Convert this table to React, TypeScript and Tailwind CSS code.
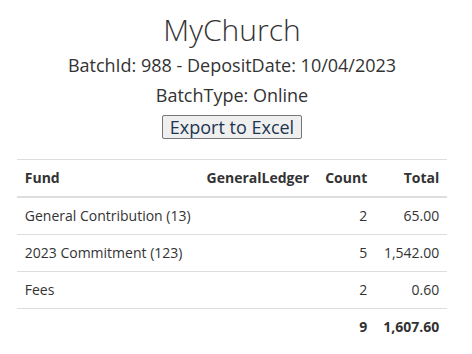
import React from "react";

type Row = { fund: string; gl: string; count: number; total: string };

const rows: Row[] = [
  { fund: "General Contribution (13)", gl: "", count: 2, total: "65.00" },
  { fund: "2023 Commitment (123)", gl: "", count: 5, total: "1,542.00" },
  { fund: "Fees", gl: "", count: 2, total: "0.60" },
];

const App = () => {
  return (
    <div className="min-h-[354px] bg-white text-[#333333] font-['Open_Sans',sans-serif]">
      <div className="ml-[17px] w-[430px] pt-[10px] flex flex-col items-center">
        <h1 className="text-[30px] leading-[40px] font-[300]">MyChurch</h1>
        <p className="text-[18px] leading-[26px] mt-[2px]">BatchId: 988 - DepositDate: 10/04/2023</p>
        <p className="text-[18px] leading-[26px] mt-[4px]">BatchType: Online</p>
        <button className="mt-[7px] h-[24px] px-[7px] text-[18px] leading-[20px] text-[#1c3550] bg-[#efefef] border border-[#767676] rounded-[2px]">
          Export to Excel
        </button>

        <table className="w-full mt-[20px] text-[14px] leading-[20px] border-collapse whitespace-nowrap">
          <thead>
            <tr className="border-t border-[#dddddd] border-b-2">
              <th className="p-2 text-left font-[700]">Fund</th>
              <th className="p-2 text-right font-[700] w-[118px]">GeneralLedger</th>
              <th className="p-2 text-right font-[700] w-[58px]">Count</th>
              <th className="p-2 text-right font-[700] w-[72px]">Total</th>
            </tr>
          </thead>
          <tbody>
            {rows.map((r) => (
              <tr key={r.fund} className="border-b border-[#dddddd]">
                <td className="p-2">{r.fund}</td>
                <td className="p-2 text-right">{r.gl}</td>
                <td className="p-2 text-right">{r.count}</td>
                <td className="p-2 text-right">{r.total}</td>
              </tr>
            ))}
            <tr>
              <td className="p-2"></td>
              <td className="p-2"></td>
              <td className="p-2 text-right font-[700]">9</td>
              <td className="p-2 text-right font-[700]">1,607.60</td>
            </tr>
          </tbody>
        </table>
      </div>
    </div>
  );
};

export default App;
